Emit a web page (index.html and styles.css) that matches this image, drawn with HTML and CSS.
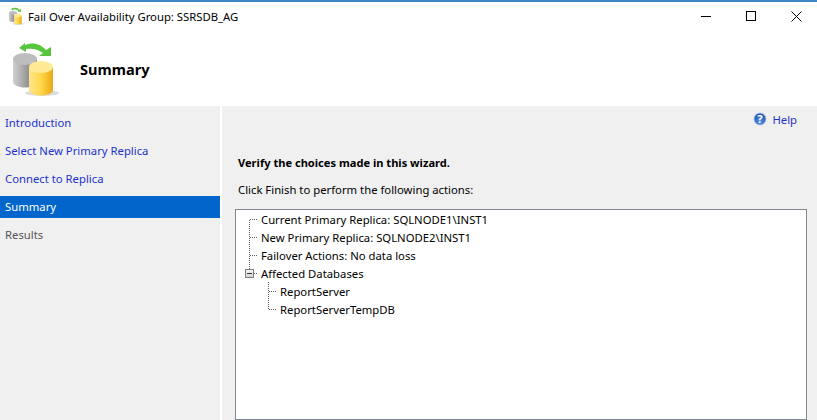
FILE: index.html
```html
<!DOCTYPE html>
<html lang="en">
  <head>
    <meta charset="UTF-8" />
    <title>Fail Over Availability Group: SSRSDB_AG</title>
    <link rel="stylesheet" href="styles.css">
  </head>
  <body>
    <!-- shared icon -->
    <svg class="defs" width="0" height="0">
      <defs>
        <linearGradient id="gray-side" x1="0" x2="1" y1="0" y2="0">
          <stop offset="0" stop-color="#d0d0d0" />
          <stop offset="0.45" stop-color="#a6a6a6" />
          <stop offset="1" stop-color="#707070" />
        </linearGradient>
        <linearGradient id="yellow-side" x1="0" x2="1" y1="0" y2="0">
          <stop offset="0" stop-color="#fde58c" />
          <stop offset="0.5" stop-color="#ffd84a" />
          <stop offset="1" stop-color="#eba816" />
        </linearGradient>
        <radialGradient id="help-ball" cx="0.5" cy="0.7" r="0.7">
          <stop offset="0" stop-color="#5a94ea" />
          <stop offset="1" stop-color="#1a4aa8" />
        </radialGradient>
        <symbol id="db-icon" viewBox="0 0 50 56">
          <ellipse cx="32" cy="52" rx="17" ry="3" fill="#dcdcdc" />
          <path d="M3 18v23c0 3 5.500 5.500 12 5.500S27 44 27 41V18z" fill="url(#gray-side)" />
          <ellipse cx="15" cy="18" rx="12" ry="6" fill="#bdbdbd" />
          <path d="M19 26v23c0 3 5.500 5.500 12 5.500S43 52 43 49V26z" fill="url(#yellow-side)" />
          <ellipse cx="31" cy="26" rx="12" ry="6" fill="#ffeb96" />
          <path d="M9 7 15 2V4C22 1 30 2 36 9L41 6V15H29L33 12C28 8 22 7 16 8V11z" fill="#58c63c" />
        </symbol>
      </defs>
    </svg>

    <div class="titlebar">
      <svg class="app-icon"><use href="#db-icon" /></svg>
      <span class="window-title">Fail Over Availability Group: SSRSDB_AG</span>
      <div class="window-btns">
        <span class="btn-min"></span>
        <span class="btn-max"></span>
        <svg class="btn-close" viewBox="0 0 11 11"><path d="M.5.500l10 10M10.500.500l-10 10" /></svg>
      </div>
    </div>

    <div class="banner">
      <svg class="banner-icon"><use href="#db-icon" /></svg>
      <h1 class="banner-tit">Summary</h1>
    </div>

    <div class="wizard">
      <!-- steps -->
      <ul class="steps">
        <li class="step">Introduction</li>
        <li class="step">Select New Primary Replica</li>
        <li class="step">Connect to Replica</li>
        <li class="step on">Summary</li>
        <li class="step off">Results</li>
      </ul>

      <div class="content">
        <div class="helpbar">
          <svg class="help-icon" viewBox="0 0 15 15">
            <circle cx="7.500" cy="7.500" r="6.500" fill="url(#help-ball)" stroke="#b4c8ea" />
            <text x="7.500" y="11.500" text-anchor="middle">?</text>
          </svg>
          <span class="help-txt">Help</span>
        </div>
        <p class="verify">Verify the choices made in this wizard.</p>
        <p class="finish">Click Finish to perform the following actions:</p>

        <!-- result tree -->
        <div class="tree">
          <div class="node">
            <svg class="twig"><path d="M4.500 10V18M4.500 9.500H13" /></svg>
            <span>Current Primary Replica: SQLNODE1\INST1</span>
          </div>
          <div class="node">
            <svg class="twig"><path d="M4.500 0V18M4.500 9.500H13" /></svg>
            <span>New Primary Replica: SQLNODE2\INST1</span>
          </div>
          <div class="node">
            <svg class="twig"><path d="M4.500 0V18M4.500 9.500H13" /></svg>
            <span>Failover Actions: No data loss</span>
          </div>
          <div class="node">
            <svg class="twig"><path d="M4.500 0V5M9 9.500H13" /></svg>
            <span class="toggle"></span>
            <span>Affected Databases</span>
          </div>
          <div class="node sub">
            <svg class="twig"><path d="M4.500 0V18M4.500 9.500H13" /></svg>
            <span>ReportServer</span>
          </div>
          <div class="node sub">
            <svg class="twig"><path d="M4.500 0V10M4.500 9.500H13" /></svg>
            <span>ReportServerTempDB</span>
          </div>
        </div>
      </div>
    </div>
  </body>
</html>
```

FILE: styles.css
```css
html,
body {
  height: 100%;
}
body {
  margin: 0;
  overflow: hidden;
  background: #fff;
  color: #000;
  font-family: "Noto Sans", "Open Sans", sans-serif;
  font-size: 11.3px;
}
.defs {
  position: absolute;
}

/* title bar */
.titlebar {
  display: flex;
  align-items: center;
  height: 30px;
  box-sizing: border-box;
  padding-left: 8px;
  border-top: 2px solid #3f86c6;
}
.app-icon {
  width: 16px;
  height: 18px;
  margin-right: 4px;
}
.window-title {
  flex: 1;
}
.window-btns {
  display: flex;
  align-items: center;
  padding-right: 15px;
  gap: 35px;
}
.btn-min {
  width: 10px;
  height: 1px;
  background: #000;
}
.btn-max {
  width: 8px;
  height: 8px;
  border: 1px solid #000;
}
.btn-close {
  width: 11px;
  height: 11px;
  stroke: #000;
  stroke-width: 1;
}

/* banner */
.banner {
  display: flex;
  align-items: center;
  height: 76px;
  padding-left: 10px;
}
.banner-icon {
  width: 50px;
  height: 56px;
  margin-top: 2px;
  margin-right: 20px;
  filter: blur(0.4px);
}
.banner-tit {
  margin: 2px 0 0;
  font-size: 14.6px;
  font-weight: bold;
}

/* wizard body */
.wizard {
  display: flex;
  gap: 2px;
  height: 314px;
}
.steps {
  width: 220px;
  margin: 0;
  padding: 6px 0 0;
  list-style: none;
  background: #f0f0f0;
}
.step {
  height: 22px;
  margin-bottom: 6px;
  padding-left: 5px;
  line-height: 21px;
  color: #2233cc;
}
.step.on {
  background: #0066cc;
  color: #fff;
}
.step.off {
  color: #555;
}

.content {
  flex: 1;
  padding: 0 10px 0 13px;
  background: #f0f0f0;
}
.helpbar {
  display: flex;
  justify-content: flex-end;
  align-items: center;
  gap: 5px;
  height: 26px;
  padding: 0 10px 0 0;
}
.help-icon {
  width: 14px;
  height: 14px;
}
.help-icon text {
  font-size: 12px;
  font-weight: bold;
  fill: #fff;
}
.help-txt {
  color: #2233cc;
}
.verify {
  margin: 22px 0 0 3px;
  font-size: 11.1px;
  font-weight: bold;
  line-height: 18px;
}
.finish {
  margin: 9px 0 0 3px;
  line-height: 18px;
}
.tree {
  height: 211px;
  margin-top: 10px;
  box-sizing: border-box;
  background: #fff;
  border: 1px solid #828790;
}
.node {
  display: flex;
  align-items: center;
  height: 18px;
  padding-left: 9px;
}
.node.sub {
  padding-left: 28px;
}
.twig {
  flex: none;
  width: 16px;
  height: 18px;
  fill: none;
  stroke: #606060;
  stroke-dasharray: 1 1;
  shape-rendering: crispEdges;
}
.toggle {
  position: absolute;
  box-sizing: border-box;
  width: 9px;
  height: 9px;
  background: linear-gradient(#f4f4f4, #d4d4d4);
  border: 1px solid #808080;
}
.toggle::after {
  content: "";
  position: absolute;
  left: 1px;
  top: 3px;
  width: 5px;
  height: 1px;
  background: #333;
}
```
